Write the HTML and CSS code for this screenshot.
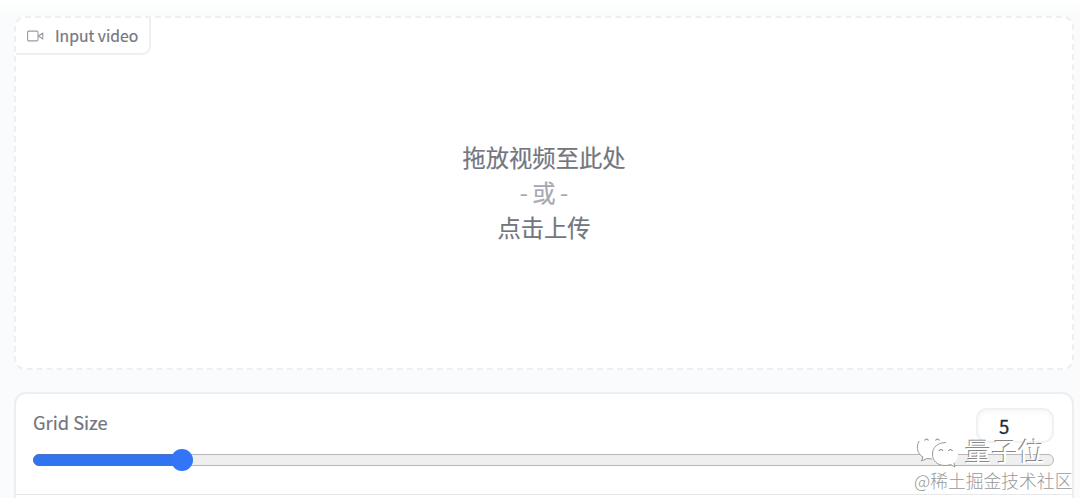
FILE: index.html
```
<!DOCTYPE html>
<html lang="zh">

<head>
    <meta charset="UTF-8">
    <meta name="viewport" content="width=device-width, initial-scale=1.0">
    <title>Input video</title>
    <link rel="stylesheet" href="styles.css">
</head>

<body>
    <div class="container">
        <div class="upload">
            <div class="label">
                <svg class="icon" viewBox="0 0 17 12">
                    <rect x="0.6" y="1.1" width="10.4" height="9.8" rx="1.2" />
                    <path d="M11.500 6 L15.800 3 V9 Z" />
                </svg>
                <span>Input video</span>
            </div>
            <div class="drop">
                <p>拖放视频至此处</p>
                <p class="or">- 或 -</p>
                <p>点击上传</p>
            </div>
        </div>
        <div class="panel">
            <div class="block">
                <div class="head">
                    <span class="title">Grid Size</span>
                    <span class="number">5</span>
                </div>
                <div class="slider">
                    <div class="fill" style="width: 14.6%"></div>
                    <div class="thumb"></div>
                </div>
            </div>
            <div class="next"></div>
        </div>
    </div>
    <div class="brand">
        <svg class="wechat" viewBox="0 0 44 36">
            <path d="M15 2 C7 2 1 7 1 14 C1 18.500 3 21.500 7 24 L5.500 28 L11 25.500 C12.500 26 14 26.200 16 26.200 L29 14 C29 7 23 2 15 2 Z" />
            <path class="edge" d="M3 8 C-0.500 15 2 21.500 7 24 L5.500 28 L11 25.500 L16 26" />
            <path class="eye" d="M8.500 7.500 Q10.500 4.500 12.500 7.500 M19.500 7.500 Q21.500 4.500 23.500 7.500" />
            <path d="M29 9.500 C21.500 9.500 16 14.500 16 21 C16 28 21.500 32.500 29 32.500 C31 32.500 33 32.200 34.500 31.500 L39 34 L38 29.800 C40.800 27.500 42 25 42 21 C42 14.500 36.500 9.500 29 9.500 Z" />
            <path class="edge" d="M30 9.500 C21.500 9.500 16.500 14.500 16.500 21 C16.500 28 21.500 32.500 29 32.500 C31 32.500 33 32.200 34.500 31.500 L39 34 L38 29.800" />
            <path class="eye" d="M23 18 Q25 15 27 18 M32.500 18 Q34.500 15 36.500 18" />
        </svg>
        <span>量子位</span>
    </div>
    <div class="source">@稀土掘金技术社区</div>
</body>

</html>
```
FILE: styles.css
```
* {
    margin: 0;
    padding: 0;
    box-sizing: border-box;
}

body {
    height: 498px;
    overflow: hidden;
    position: relative;
    background: linear-gradient(#fff, #f9fbfc 16px);
    font-family: "Noto Sans CJK SC", sans-serif;
    color: #73767e;
}

.container {
    padding: 16px 6px 0 14px;
}

.upload {
    height: 354px;
    border: 2px dashed #eeeff1;
    border-radius: 11px;
    background-color: #fff;
    display: flex;
    flex-direction: column;
}

.label {
    align-self: flex-start;
    width: 135px;
    height: 37px;
    padding-left: 11px;
    display: flex;
    align-items: center;
    border-right: 2px solid #eeeff1;
    border-bottom: 2px solid #eeeff1;
    border-radius: 9px 0 9px 0;
    font-size: 15.7px;
    line-height: 35px;
    white-space: nowrap;
    -webkit-text-stroke: 0.2px #73767e;
}

.icon {
    width: 17px;
    height: 12px;
    margin-right: 11px;
    fill: none;
    stroke: #999ca2;
    stroke-width: 1.1;
    stroke-linejoin: round;
}

.drop {
    padding-top: 85px;
    text-align: center;
    font-size: 23.3px;
    line-height: 35px;
    -webkit-text-stroke: 0.2px #73767e;
}

.drop .or {
    color: #a3a8b1;
    word-spacing: -0.8px;
    -webkit-text-stroke-color: #a3a8b1;
}

.panel {
    height: 106px;
    margin-top: 22px;
    border: 2px solid #edeef0;
    border-bottom: none;
    border-radius: 12px 12px 0 0;
    background-color: #fff;
}

.block {
    height: 100px;
    padding: 14px 18px 0 17px;
}

.next {
    height: 4px;
    border-top: 1.5px solid #e6e8eb;
}

.head {
    height: 36px;
    display: flex;
    justify-content: space-between;
}

.title {
    font-size: 18.3px;
    line-height: 28px;
    -webkit-text-stroke: 0.2px #73767e;
}

.number {
    width: 78px;
    height: 35px;
    padding-left: 21px;
    border: 2px solid #f0f1f3;
    border-radius: 11px;
    box-shadow: inset 0 2px 4px #f6f7f8;
    color: #1f2937;
    font-size: 18.5px;
    line-height: 32px;
    -webkit-text-stroke: 0.3px #1f2937;
}

.slider {
    height: 12px;
    margin-top: 10px;
    display: flex;
    align-items: center;
    border: 1.5px solid #b7b7b7;
    border-radius: 6px;
    background-color: #efefef;
}

.fill {
    height: 12px;
    flex: none;
    border: 1px solid #4b72c4;
    border-radius: 6px;
    margin-left: -1px;
    background-color: #3174f1;
}

.thumb {
    width: 22px;
    height: 22px;
    flex: none;
    margin-left: -11px;
    border-radius: 50%;
    background-color: #3375f6;
}

/* watermark */
.brand {
    position: absolute;
    left: 916px;
    top: 433px;
    display: flex;
    align-items: center;
    color: #fff;
    font-size: 26.5px;
    line-height: 24px;
    text-shadow: -1px -1px 0 #888;
}

.wechat {
    width: 44px;
    height: 36px;
    margin-right: 5px;
    fill: #fff;
}

.wechat .edge {
    fill: none;
    stroke: #999;
    stroke-width: 1;
}

.wechat .eye {
    fill: none;
    stroke: #888;
    stroke-width: 1.2;
}

.source {
    position: absolute;
    left: 914px;
    top: 467px;
    color: #999;
    font-size: 17.8px;
    line-height: 26px;
    font-weight: 300;
    white-space: nowrap;
}
```
